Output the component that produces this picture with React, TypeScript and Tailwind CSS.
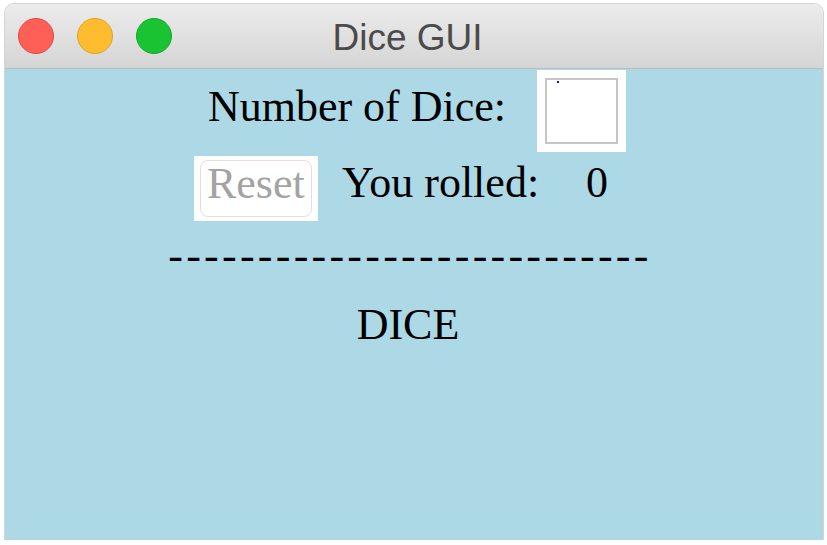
export default function App() {
  const serif = { fontFamily: '"Liberation Serif", "Times New Roman", serif' };

  return (
    <div className="w-[827px] h-[545px] bg-white overflow-hidden">
      {/* window */}
      <div className="ml-[4px] mt-[3px] w-[820px] h-[537px] flex flex-col rounded-t-[10px] overflow-hidden border border-[#d4d4d4] border-b-0">
        {/* title bar */}
        <div className="relative h-[65px] flex items-center gap-[23px] pl-[13px] bg-gradient-to-b from-[#ececec] to-[#d5d5d5] border-b border-[#bdbdbd]">
          <span className="w-[36px] h-[36px] rounded-full bg-[#fe5f57] border border-[#e2463f]" />
          <span className="w-[36px] h-[36px] rounded-full bg-[#febc2e] border border-[#e0a125]" />
          <span className="w-[36px] h-[36px] rounded-full bg-[#19c332] border border-[#15a72a]" />
          <div
            className="absolute inset-0 flex items-center justify-center pr-[13px] pt-[3px] text-[37px] text-[#4b4b4b]"
            style={{ fontFamily: '"Liberation Sans", Arial, sans-serif' }}
          >
            Dice GUI
          </div>
        </div>

        {/* content */}
        <div className="flex-1 flex flex-col items-center bg-[#add8e6] text-black" style={serif}>
          {/* number of dice */}
          <div className="mt-[1px] ml-[6px] flex items-start h-[82px] text-[44px] leading-[44px]">
            <span className="mt-[15px]">Number of Dice:</span>
            <div className="ml-[31px] w-[89px] h-[82px] bg-white p-[8px]">
              <div className="relative w-full h-full border-2 border-[#c6c6c6]">
                <span className="absolute left-[10px] top-[1px] w-[2px] h-[2px] bg-[#1a1a8a]" />
              </div>
            </div>
          </div>

          {/* reset / rolled */}
          <div className="mt-[4px] flex items-start h-[65px] text-[44px] leading-[44px]">
            <div className="w-[124px] h-[65px] bg-white px-[6px] pt-[4px] pb-[4px]">
              <button className="w-full h-full rounded-[8px] border border-[#e6dcdc] bg-white text-[#a3a3a3] leading-[44px] pb-[9px]">
                Reset
              </button>
            </div>
            <span className="ml-[24px] mt-[5px]">You rolled:</span>
            <span className="ml-[47px] mt-[5px] w-[48px]">0</span>
          </div>

          {/* divider */}
          <div className="mt-[13px] text-[44px] leading-[44px] tracking-[3.25px] mr-[8px]">
            ---------------------------
          </div>

          {/* dice */}
          <div className="mt-[25px] text-[44px] leading-[44px] mr-[12px]">DICE</div>
        </div>
      </div>
    </div>
  );
}
